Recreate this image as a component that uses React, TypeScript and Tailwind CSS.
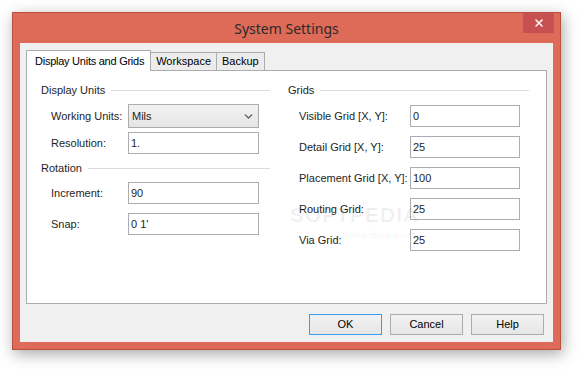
import { ChevronDown, X } from 'lucide-react'

const leftRows = [
  { label: "Resolution:", value: "1." },
]

const rotationRows = [
  { label: "Increment:", value: "90" },
  { label: "Snap:", value: "0 1'" },
]

const gridRows = [
  { label: "Visible Grid [X, Y]:", value: "0" },
  { label: "Detail Grid [X, Y]:", value: "25" },
  { label: "Placement Grid [X, Y]:", value: "100" },
  { label: "Routing Grid:", value: "25" },
  { label: "Via Grid:", value: "25" },
]

function Heading({ title }: { title: string }) {
  return (
    <div className="flex items-center h-[16px]">
      <span className="pr-[6px] whitespace-nowrap">{title}</span>
      <div className="flex-1 h-px bg-[#dcdcdc]" />
    </div>
  )
}

function Field({ label, value, labelW, inputW }: { label: string; value: string; labelW: string; inputW: string }) {
  return (
    <div className="flex items-center h-[22px]">
      <span className={labelW + " shrink-0 whitespace-nowrap"}>{label}</span>
      <div className={inputW + " shrink-0 h-[22px] border border-[#abadb3] bg-white px-[2px] leading-[20px]"}>
        {value}
      </div>
    </div>
  )
}

function Button({ label, primary }: { label: string; primary?: boolean }) {
  return (
    <div
      className={
        "w-[73px] h-[21px] flex items-center justify-center border bg-gradient-to-b from-[#f2f2f2] to-[#e6e6e6] " +
        (primary ? "border-[#3c9cf0]" : "border-[#acacac]")
      }
    >
      {label}
    </div>
  )
}

export default function App() {
  return (
    <div
      className="w-[581px] h-[370px] bg-white pl-[12px] pt-[12px] text-[11px] text-black"
      style={{ fontFamily: '"Liberation Sans", Arial, sans-serif' }}
    >
      <div className="w-[549px] h-[338px] bg-[#de6a58] border border-[#b8503f] shadow-[2px_4px_14px_rgba(0,0,0,0.35)] flex flex-col">
        {/* title bar */}
        <div className="relative h-[30px] flex items-center justify-center">
          <span
            className="text-[14px] text-[#2b2b2b] pt-[1px]"
            style={{ fontFamily: '"Noto Sans", "Open Sans", sans-serif' }}
          >
            System Settings
          </span>
          <div className="absolute right-[6px] top-0 w-[31px] h-[20px] bg-[#c75050] flex items-center justify-center">
            <X size={12} strokeWidth={3} className="text-white" />
          </div>
        </div>

        {/* client */}
        <div className="mx-[7px] mb-[7px] flex-1 bg-[#f0f0f0] flex flex-col px-[6px] pt-[7px]">
          {/* tabs */}
          <div className="flex items-end h-[20px] relative z-10">
            <div className="h-[21px] pl-[8px] pr-[6px] border border-b-0 border-[#acacac] bg-white flex items-center mb-[-1px] whitespace-nowrap tracking-[-0.25px]">
              Display Units and Grids
            </div>
            <div className="h-[18px] px-[5px] border border-l-0 border-b-0 border-[#acacac] bg-[#ececec] flex items-center">
              Workspace
            </div>
            <div className="h-[18px] px-[5px] border border-l-0 border-b-0 border-[#acacac] bg-[#ececec] flex items-center">
              Backup
            </div>
          </div>

          {/* tab page */}
          <div className="h-[234px] border border-[#acacac] bg-white flex pt-[11px] text-[#1e1e1e]">
            {/* left column */}
            <div className="w-[243px] shrink-0 pl-[14px] flex flex-col">
              <Heading title="Display Units" />
              <div className="flex flex-col gap-[4px] pl-[10px] mt-[6px]">
                <div className="flex items-center h-[24px]">
                  <span className="w-[77px] whitespace-nowrap">Working Units:</span>
                  <div className="w-[131px] h-[24px] border border-[#acacac] bg-gradient-to-b from-[#f2f2f2] to-[#e5e5e5] flex items-center justify-between px-[3px]">
                    <span>Mils</span>
                    <ChevronDown size={13} strokeWidth={2.5} className="text-[#555]" />
                  </div>
                </div>
                {leftRows.map((r) => (
                  <Field key={r.label} label={r.label} value={r.value} labelW="w-[77px]" inputW="w-[131px]" />
                ))}
              </div>
              <div className="mt-[6px]">
                <Heading title="Rotation" />
              </div>
              <div className="flex flex-col gap-[9px] pl-[10px] mt-[6px]">
                {rotationRows.map((r) => (
                  <Field key={r.label} label={r.label} value={r.value} labelW="w-[77px]" inputW="w-[131px]" />
                ))}
              </div>
            </div>

            {/* right column */}
            <div className="w-[260px] shrink-0 pl-[18px] flex flex-col relative">
              <div className="w-[241px]">
                <Heading title="Grids" />
              </div>
              <div className="flex flex-col gap-[9px] pl-[11px] mt-[7px]">
                {gridRows.map((r) => (
                  <Field key={r.label} label={r.label} value={r.value} labelW="w-[111px]" inputW="w-[110px]" />
                ))}
              </div>
              {/* watermark */}
              <span className="absolute left-[20px] top-[122px] text-[21px] leading-none font-bold tracking-[1px] text-black/[0.06] pointer-events-none">
                SOFTPEDIA
              </span>
              <span className="absolute left-[70px] top-[149px] text-[9px] leading-none text-black/[0.07] pointer-events-none">
                www.softpedia.com
              </span>
            </div>
          </div>

          {/* buttons */}
          <div className="flex justify-end gap-[8px] mt-[10px] pr-[3px]">
            <Button label="OK" primary />
            <Button label="Cancel" />
            <Button label="Help" />
          </div>
        </div>
      </div>
    </div>
  )
}
